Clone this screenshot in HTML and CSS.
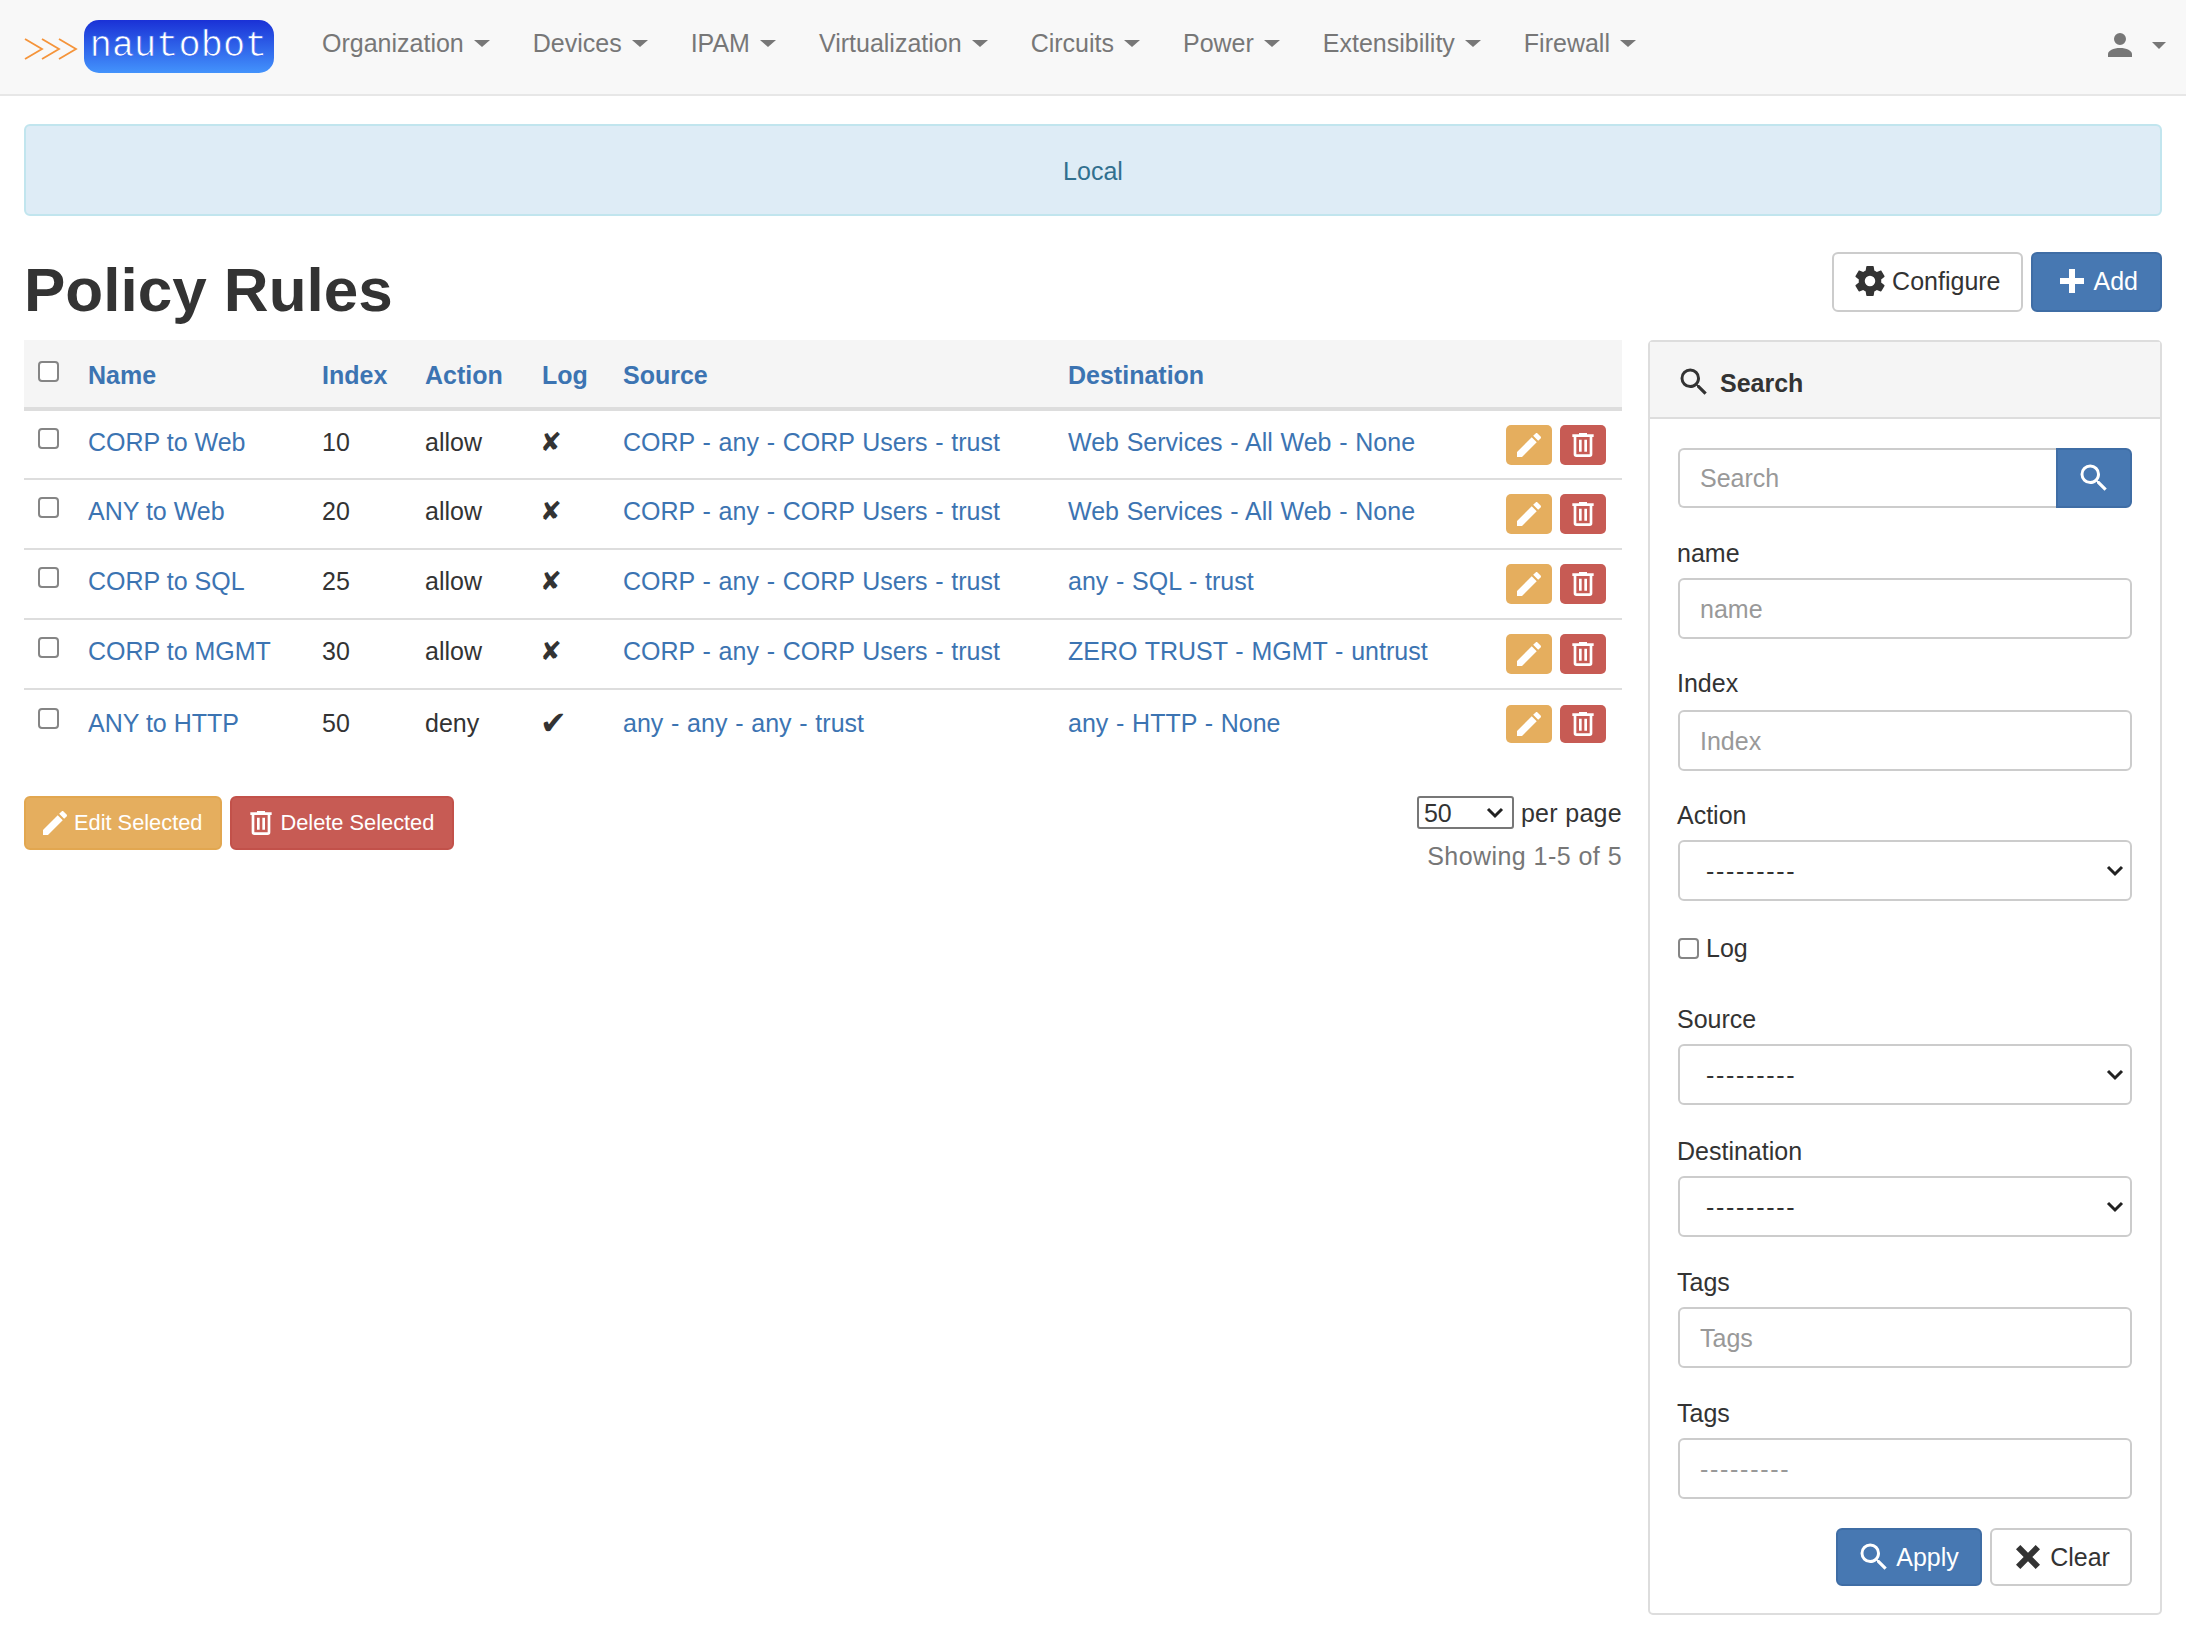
FILE: index.html
```html
<!DOCTYPE html>
<html lang="en">
<head>
<meta charset="utf-8">
<title>Policy Rules</title>
<link rel="stylesheet" href="styles.css">
</head>
<body>
<svg class="defs" aria-hidden="true">
  <defs>
    <symbol id="i-pencil" viewBox="0 0 24 24"><path d="M20.71,7.04C21.1,6.65 21.1,6 20.71,5.63L18.37,3.29C18,2.9 17.35,2.9 16.96,3.29L15.12,5.12L18.87,8.87M3,17.25V21H6.75L17.81,9.93L14.06,6.18L3,17.25Z"/></symbol>
    <symbol id="i-trash" viewBox="0 0 24 24"><path d="M9,3V4H4V6H5V19A2,2 0 0,0 7,21H17A2,2 0 0,0 19,19V6H20V4H15V3H9M7,6H17V19H7V6M9,8V17H11V8H9M13,8V17H15V8H13Z"/></symbol>
    <symbol id="i-plus" viewBox="0 0 24 24"><path d="M20 14H14V20H10V14H4V10H10V4H14V10H20V14Z"/></symbol>
    <symbol id="i-close" viewBox="0 0 24 24"><path d="M20 6.91L17.09 4L12 9.09L6.91 4L4 6.91L9.09 12L4 17.09L6.91 20L12 14.91L17.09 20L20 17.09L14.91 12L20 6.91Z"/></symbol>
    <symbol id="i-search" viewBox="0 0 24 24"><path d="M9.5,3A6.5,6.5 0 0,1 16,9.5C16,11.11 15.41,12.59 14.44,13.73L14.71,14H15.5L20.5,19L19,20.5L14,15.5V14.71L13.73,14.44C12.59,15.41 11.11,16 9.5,16A6.5,6.5 0 0,1 3,9.5A6.5,6.5 0 0,1 9.5,3M9.5,5C7,5 5,7 5,9.5C5,12 7,14 9.5,14C12,14 14,12 14,9.5C14,7 12,5 9.5,5Z"/></symbol>
    <symbol id="i-account" viewBox="0 0 24 24"><path d="M12,4A4,4 0 0,1 16,8A4,4 0 0,1 12,12A4,4 0 0,1 8,8A4,4 0 0,1 12,4M12,14C16.42,14 20,15.79 20,18V20H4V18C4,15.79 7.58,14 12,14Z"/></symbol>
    <symbol id="i-cog" viewBox="0 0 24 24"><path d="M12,15.5A3.5,3.5 0 0,1 8.5,12A3.5,3.5 0 0,1 12,8.5A3.5,3.5 0 0,1 15.5,12A3.5,3.5 0 0,1 12,15.5M19.43,12.97C19.47,12.65 19.5,12.33 19.5,12C19.5,11.67 19.47,11.34 19.43,11L21.54,9.37C21.73,9.22 21.78,8.95 21.66,8.73L19.66,5.27C19.54,5.05 19.27,4.96 19.05,5.05L16.56,6.05C16.04,5.66 15.5,5.32 14.87,5.07L14.5,2.42C14.46,2.18 14.25,2 14,2H10C9.75,2 9.54,2.18 9.5,2.42L9.13,5.07C8.5,5.32 7.96,5.66 7.44,6.05L4.95,5.05C4.73,4.96 4.46,5.05 4.34,5.27L2.34,8.73C2.21,8.95 2.27,9.22 2.46,9.37L4.57,11C4.53,11.34 4.5,11.67 4.5,12C4.5,12.33 4.53,12.65 4.57,12.97L2.46,14.63C2.27,14.78 2.21,15.05 2.34,15.27L4.34,18.73C4.46,18.95 4.73,19.03 4.95,18.95L7.44,17.94C7.96,18.34 8.5,18.68 9.13,18.93L9.5,21.58C9.54,21.82 9.75,22 10,22H14C14.25,22 14.46,21.82 14.5,21.58L14.87,18.93C15.5,18.67 16.04,18.34 16.56,17.94L19.05,18.95C19.27,19.03 19.54,18.95 19.66,18.73L21.66,15.27C21.78,15.05 21.73,14.78 21.54,14.63L19.43,12.97Z"/></symbol>
  </defs>
</svg>

<nav class="navbar">
  <a class="brand" href="#">
    <svg class="chevrons" viewBox="0 0 54 24"><path d="M1 2 L18 12 L1 22 M18 2 L35 12 L18 22 M35 2 L52 12 L35 22"/></svg>
    <span class="logo">nautobot</span>
  </a>
  <ul class="menu">
    <li><a href="#">Organization<i class="caret"></i></a></li>
    <li><a href="#">Devices<i class="caret"></i></a></li>
    <li><a href="#">IPAM<i class="caret"></i></a></li>
    <li><a href="#">Virtualization<i class="caret"></i></a></li>
    <li><a href="#">Circuits<i class="caret"></i></a></li>
    <li><a href="#">Power<i class="caret"></i></a></li>
    <li><a href="#">Extensibility<i class="caret"></i></a></li>
    <li><a href="#">Firewall<i class="caret"></i></a></li>
  </ul>
  <a class="user" href="#"><svg class="user-icon"><use href="#i-account"/></svg><i class="caret"></i></a>
</nav>

<main class="page">
  <div class="banner">Local</div>

  <header class="title-row">
    <h1>Policy Rules</h1>
    <div class="title-actions">
      <a class="btn btn-default btn-config" href="#"><svg class="ico"><use href="#i-cog"/></svg>Configure</a>
      <a class="btn btn-primary btn-add" href="#"><svg class="ico"><use href="#i-plus"/></svg>Add</a>
    </div>
  </header>

  <div class="content">
    <section class="list">
      <table class="rules">
        <colgroup>
          <col class="c-check"><col class="c-name"><col class="c-index"><col class="c-action"><col class="c-log"><col class="c-source"><col class="c-dest"><col class="c-ops">
        </colgroup>
        <thead>
          <tr>
            <th><input type="checkbox" class="check"></th>
            <th><a href="#">Name</a></th>
            <th><a href="#">Index</a></th>
            <th><a href="#">Action</a></th>
            <th><a href="#">Log</a></th>
            <th><a href="#">Source</a></th>
            <th><a href="#">Destination</a></th>
            <th></th>
          </tr>
        </thead>
        <tbody>
          <tr>
            <td><input type="checkbox" class="check"></td>
            <td><a href="#">CORP to Web</a></td><td>10</td><td>allow</td><td class="mark">✘</td>
            <td class="path"><a href="#">CORP - any - CORP Users - trust</a></td>
            <td class="path"><a href="#">Web Services - All Web - None</a></td>
            <td class="ops"><a class="op op-edit" href="#"><svg><use href="#i-pencil"/></svg></a><a class="op op-del" href="#"><svg><use href="#i-trash"/></svg></a></td>
          </tr>
          <tr>
            <td><input type="checkbox" class="check"></td>
            <td><a href="#">ANY to Web</a></td><td>20</td><td>allow</td><td class="mark">✘</td>
            <td class="path"><a href="#">CORP - any - CORP Users - trust</a></td>
            <td class="path"><a href="#">Web Services - All Web - None</a></td>
            <td class="ops"><a class="op op-edit" href="#"><svg><use href="#i-pencil"/></svg></a><a class="op op-del" href="#"><svg><use href="#i-trash"/></svg></a></td>
          </tr>
          <tr>
            <td><input type="checkbox" class="check"></td>
            <td><a href="#">CORP to SQL</a></td><td>25</td><td>allow</td><td class="mark">✘</td>
            <td class="path"><a href="#">CORP - any - CORP Users - trust</a></td>
            <td class="path"><a href="#">any - SQL - trust</a></td>
            <td class="ops"><a class="op op-edit" href="#"><svg><use href="#i-pencil"/></svg></a><a class="op op-del" href="#"><svg><use href="#i-trash"/></svg></a></td>
          </tr>
          <tr>
            <td><input type="checkbox" class="check"></td>
            <td><a href="#">CORP to MGMT</a></td><td>30</td><td>allow</td><td class="mark">✘</td>
            <td class="path"><a href="#">CORP - any - CORP Users - trust</a></td>
            <td class="path"><a href="#">ZERO TRUST - MGMT - untrust</a></td>
            <td class="ops"><a class="op op-edit" href="#"><svg><use href="#i-pencil"/></svg></a><a class="op op-del" href="#"><svg><use href="#i-trash"/></svg></a></td>
          </tr>
          <tr class="last">
            <td><input type="checkbox" class="check"></td>
            <td><a href="#">ANY to HTTP</a></td><td>50</td><td>deny</td><td class="mark mark-yes">✔</td>
            <td class="path"><a href="#">any - any - any - trust</a></td>
            <td class="path"><a href="#">any - HTTP - None</a></td>
            <td class="ops"><a class="op op-edit" href="#"><svg><use href="#i-pencil"/></svg></a><a class="op op-del" href="#"><svg><use href="#i-trash"/></svg></a></td>
          </tr>
        </tbody>
      </table>

      <div class="list-footer">
        <div class="bulk">
          <a class="btn btn-sm btn-warning" href="#"><svg class="ico"><use href="#i-pencil"/></svg>Edit Selected</a>
          <a class="btn btn-sm btn-danger" href="#"><svg class="ico"><use href="#i-trash"/></svg>Delete Selected</a>
        </div>
        <div class="paging">
          <div class="per-page"><select class="per-select"><option>50</option></select><span>per page</span></div>
          <div class="showing">Showing 1-5 of 5</div>
        </div>
      </div>
    </section>

    <aside class="panel">
      <div class="panel-head"><svg class="ico"><use href="#i-search"/></svg><span>Search</span></div>
      <form class="panel-body">
        <div class="search-group">
          <input class="control" type="text" placeholder="Search">
          <button class="search-btn" type="button"><svg class="ico"><use href="#i-search"/></svg></button>
        </div>
        <div class="field"><label>name</label><input class="control" type="text" placeholder="name"></div>
        <div class="field field-index"><label>Index</label><input class="control" type="text" placeholder="Index"></div>
        <div class="field field-short"><label>Action</label><select class="control picker"><option>---------</option></select></div>
        <label class="log-row"><input type="checkbox" class="check"><span>Log</span></label>
        <div class="field"><label>Source</label><select class="control picker"><option>---------</option></select></div>
        <div class="field field-dest"><label>Destination</label><select class="control picker"><option>---------</option></select></div>
        <div class="field"><label>Tags</label><input class="control" type="text" placeholder="Tags"></div>
        <div class="field"><label>Tags</label><input class="control dashes" type="text" placeholder="---------"></div>
        <div class="form-actions">
          <a class="btn btn-primary" href="#"><svg class="ico"><use href="#i-search"/></svg>Apply</a>
          <a class="btn btn-default" href="#"><svg class="ico"><use href="#i-close"/></svg>Clear</a>
        </div>
      </form>
    </aside>
  </div>
</main>
</body>
</html>
```
FILE: styles.css
```css
* { box-sizing: border-box; }
html, body { margin: 0; padding: 0; background: #fff; }
body {
  font-family: "Liberation Sans", Arial, sans-serif;
  font-size: 25px;
  line-height: 36px;
  color: #333;
}
a { color: #3c74b2; text-decoration: none; }
svg { fill: currentColor; }
.defs { width: 0; height: 0; display: block; overflow: hidden; }

/* navbar */
.navbar {
  display: flex;
  align-items: flex-start;
  height: 96px;
  background: #f8f8f8;
  border-bottom: 2px solid #e7e7e7;
}
.brand { display: flex; align-items: center; margin: 20px 0 0 24px; }
.chevrons { width: 54px; height: 24px; margin-top: 4px; margin-right: 5.5px; fill: none; stroke: #f5943a; stroke-width: 1.8; }
.logo {
  width: 190px;
  height: 53px;
  border-radius: 15px;
  background: linear-gradient(#1a31d6, #4393fc);
  color: #fff;
  font-family: "Liberation Mono", monospace;
  font-size: 37px;
  line-height: 53px;
  text-align: center;
  -webkit-text-stroke: 0.7px #2f64ea;
}
.menu { display: flex; list-style: none; margin: 25px 0 0 48.5px; padding: 0; }
.menu li { margin-right: 43px; }
.menu a { display: flex; align-items: center; color: #777; white-space: nowrap; }
.caret {
  display: inline-block;
  width: 0; height: 0;
  margin-left: 10px;
  border-top: 7px solid #777;
  border-left: 8px solid transparent;
  border-right: 8px solid transparent;
}
.user { display: flex; align-items: center; margin: 27px 20px 0 auto; color: #777; }
.user-icon { width: 36px; height: 36px; }
.user .caret { margin-left: 14px; border-left-width: 7px; border-right-width: 7px; }

/* page */
.page { padding: 28px 24px 17px; }
.banner {
  height: 92px;
  border: 2px solid #c1e5ee;
  border-radius: 6px;
  background: #deecf6;
  color: #31708f;
  text-align: center;
  line-height: 90px;
}
.title-row { display: flex; justify-content: space-between; height: 124px; }
h1 { margin: 36px 0 0; font-size: 62px; line-height: 76px; font-weight: 700; color: #333; }
.title-actions { display: flex; gap: 8px; margin-top: 36px; }

.btn {
  display: inline-flex;
  align-items: center;
  justify-content: center;
  height: 60px;
  padding: 0 22px 2px 18px;
  border: 2px solid transparent;
  border-radius: 6px;
  white-space: nowrap;
}
.btn-config { padding-right: 20px; }
.btn-add { padding-left: 21px; }
.ico { width: 36px; height: 36px; margin-right: 4px; flex: none; }
.btn-default { background: #fff; color: #333; border-color: #ccc; }
.btn-primary { background: #4778b2; color: #fff; border-color: #3f6da5; }
.btn-warning { background: #e5ae5e; color: #fff; border-color: #e2a750; }
.btn-danger { background: #c75b54; color: #fff; border-color: #c2514a; }
.btn-sm { height: 54px; padding: 0 18px 0 13px; font-size: 21.8px; }
.btn-sm .ico { width: 32px; height: 32px; margin-right: 3px; }

.content { display: grid; grid-template-columns: 1598px 514px; column-gap: 26px; align-items: start; }

/* table */
.rules { width: 1598px; border-collapse: collapse; table-layout: fixed; }
.c-check { width: 50px; }
.c-name { width: 234px; }
.c-index { width: 103px; }
.c-action { width: 117px; }
.c-log { width: 81px; }
.c-source { width: 445px; }
.c-dest { width: 438px; }
.c-ops { width: 130px; }
.rules th {
  height: 69px;
  padding: 3px 14px 0;
  text-align: left;
  background: #f5f5f5;
  border-bottom: 4px solid #ddd;
  font-weight: 700;
}
.rules td {
  height: 70px;
  padding: 13px 14px 0;
  vertical-align: top;
  border-bottom: 2px solid #ddd;
}
.rules tr.last td { border-bottom: 0; padding-top: 15px; }
.check {
  appearance: none;
  width: 21px; height: 21px;
  margin: 0;
  display: block;
  background: #fff;
  border: 2px solid #858585;
  border-radius: 4px;
}
.rules .check { position: relative; top: 4px; }
.rules th .check { top: -4px; }
.rules .last .check { top: 3px; }
.rules td.mark { font-family: "DejaVu Sans", sans-serif; font-size: 26px; padding-left: 12px; }
.rules td.mark-yes { font-size: 32px; }
.path { word-spacing: 0.8px; }
.rules td.ops { padding: 14px 16px 0 0; text-align: right; font-size: 0; line-height: 0; }
.rules tr.last td.ops { padding-top: 15px; }
.op {
  display: inline-flex;
  align-items: center;
  justify-content: center;
  width: 46px; height: 40px;
  border-radius: 5px;
  color: #fff;
  margin-left: 8px;
}
.op svg { width: 32px; height: 32px; }
.op-edit { background: #e5ae5e; }
.op-del { background: #c75b54; }
.last .op { height: 38px; }

.list-footer { display: flex; justify-content: space-between; margin-top: 37px; }
.bulk { display: flex; gap: 8px; }
.paging { text-align: right; color: #333; }
.per-page { display: flex; align-items: center; justify-content: flex-end; gap: 7px; height: 33px; letter-spacing: 0.3px; }
.per-select {
  appearance: none;
  width: 97px; height: 33px;
  padding: 0 0 0 5px;
  font: 25px "Liberation Sans", Arial, sans-serif;
  color: #333;
  background: #fff url("data:image/svg+xml,%3Csvg xmlns='http://www.w3.org/2000/svg' viewBox='0 0 18 12'%3E%3Cpath d='M2 2l7 7 7-7' fill='none' stroke='%23222' stroke-width='3'/%3E%3C/svg%3E") no-repeat right 8px center / 18px 12px;
  border: 2px solid #777;
  border-radius: 3px;
}
.showing { color: #777; margin-top: 9px; letter-spacing: 0.45px; }

/* search panel */
.panel { border: 2px solid #ddd; border-radius: 5px; height: 1275px; }
.panel-head {
  display: flex;
  align-items: center;
  height: 77px;
  padding: 0 26px;
  background: #f5f5f5;
  border-bottom: 2px solid #ddd;
  font-weight: 700;
  line-height: 1;
}
.panel-head .ico { margin: 4px 8px 0 0; }
.panel-head span { margin-top: 7px; }
.panel-body { padding: 29px 28px 0; }
.control {
  display: block;
  width: 100%;
  height: 61px;
  padding: 1px 20px 0;
  border: 2px solid #ccc;
  border-radius: 6px;
  background: #fff;
  color: #333;
  font: 25px "Liberation Sans", Arial, sans-serif;
}
.control::placeholder { color: #999; opacity: 1; }
.dashes { letter-spacing: 1.7px; }
.picker {
  appearance: none;
  padding-left: 26px;
  letter-spacing: 1.7px;
  background: #fff url("data:image/svg+xml,%3Csvg xmlns='http://www.w3.org/2000/svg' viewBox='0 0 18 12'%3E%3Cpath d='M2 2l7 7 7-7' fill='none' stroke='%23222' stroke-width='3'/%3E%3C/svg%3E") no-repeat right 6px center / 18px 12px;
}
.search-group { display: flex; height: 60px; }
.search-group .control { height: 60px; flex: 1; min-width: 0; border-radius: 6px 0 0 6px; border-right: 0; }
.search-btn {
  width: 76px;
  padding: 0;
  display: flex;
  align-items: center;
  justify-content: center;
  background: #4778b2;
  color: #fff;
  border: 2px solid #3f6da5;
  border-radius: 0 6px 6px 0;
}
.search-btn .ico { margin: 0; }
.field { margin-top: 27px; }
.field > label { display: block; height: 36px; margin-bottom: 7px; margin-left: -1px; }
.field-index { margin-top: 26px; }
.field-index > label { margin-bottom: 9px; }
.field-short { margin-top: 26px; }
.field-dest { margin-top: 28px; }
.log-row { display: flex; align-items: center; gap: 7px; height: 36px; margin-top: 29px; margin-bottom: 35px; }
.form-actions { display: flex; justify-content: flex-end; gap: 8px; margin-top: 29px; }
.form-actions .btn { height: 58px; }
.form-actions .btn-primary { width: 146px; padding: 0 3px 1px 0; }
.form-actions .btn-default { width: 142px; padding: 0 2px 1px 0; }
```
